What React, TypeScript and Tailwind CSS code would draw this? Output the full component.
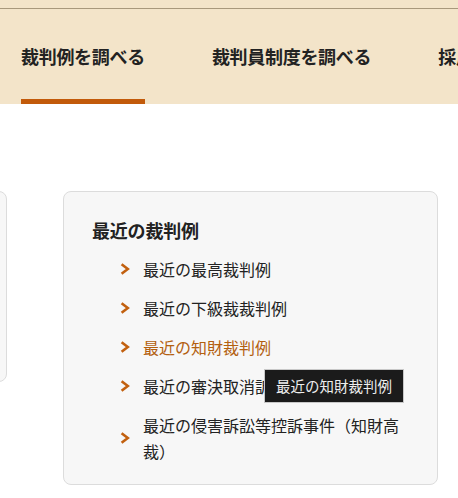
import React from 'react';

const font = { fontFamily: '"Noto Sans CJK JP", "Noto Sans", sans-serif' };

const links = [
  { label: '最近の最高裁判例' },
  { label: '最近の下級裁裁判例' },
  { label: '最近の知財裁判例', hover: true },
  { label: '最近の審決取消訴訟' },
  { label: '最近の侵害訴訟等控訴事件（知財高裁）' },
];

const Chevron = () => (
  <svg width="10" height="12" viewBox="0 0 10 12" className="shrink-0">
    <path d="M1.6 1.2 L7.8 6 L1.6 10.8" fill="none" stroke="#c2600f" strokeWidth="2.6" />
  </svg>
);

const App = () => {
  return (
    <div className="w-[458px] h-[498px] overflow-hidden bg-white text-[#222]" style={font}>
      {/* header */}
      <div className="bg-[#f3e4c9]">
        <div className="h-[8px]" />
        <div className="border-t border-[#a8987c]" />
        <nav className="flex gap-[67px] pl-[21px] h-[95px] whitespace-nowrap">
          <a className="relative flex items-center text-[18px] font-bold tracking-[-0.3px] text-[#222]">
            裁判例を調べる
            <span className="absolute left-0 right-0 bottom-0 h-[5px] bg-[#c25a0a]" />
          </a>
          <a className="flex items-center text-[18px] font-bold tracking-[-0.3px] text-[#222]">裁判員制度を調べる</a>
          <a className="flex items-center text-[18px] font-bold tracking-[-0.3px] text-[#222]">採用情報</a>
        </nav>
      </div>

      {/* cards */}
      <div className="flex gap-[56px] mt-[87px] items-start">
        <div className="-ml-[300px] w-[307px] h-[191px] shrink-0 rounded-[8px] border border-[#dcdcdc] bg-[#f7f7f7]" />
        <div className="relative w-[375px] h-[294px] shrink-0 rounded-[8px] border border-[#dcdcdc] bg-[#f7f7f7] pt-[25px] pl-[28px] pr-[24px]">
          <h3 className="text-[18px] font-bold leading-[27px] tracking-[-0.2px]">最近の裁判例</h3>
          <ul className="mt-[12px] pl-[28px] flex flex-col gap-[13px]">
            {links.map((l) => (
              <li key={l.label} className="flex items-center gap-[13px]">
                <Chevron />
                <span
                  className={`text-[16px] leading-[26px] ${l.hover ? 'text-[#b3600f]' : 'text-[#222]'}`}
                >
                  {l.label}
                </span>
              </li>
            ))}
          </ul>
          <div className="absolute left-[200px] top-[177px] px-[11px] h-[34px] flex items-center bg-[#1b1b1b] border border-[#c8c8c8] text-[14.5px] text-[#eeeeee] whitespace-nowrap">
            最近の知財裁判例
          </div>
        </div>
      </div>
    </div>
  );
};

export default App;
